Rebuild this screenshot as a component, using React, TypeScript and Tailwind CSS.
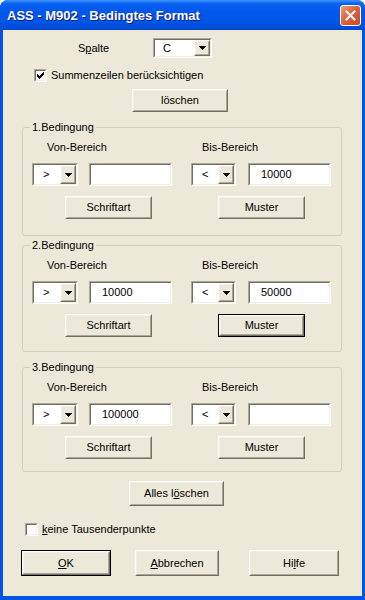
import React from 'react';

const ui = "font-['Liberation_Sans',Arial,sans-serif] text-[11px] leading-[13px] text-black";

type BoxProps = { className?: string; children?: React.ReactNode };

function Raised({ className = '', children, isDefault = false }: BoxProps & { isDefault?: boolean }) {
  const body = (
    <div className="h-full w-full border border-t-white border-l-white border-r-[#716F64] border-b-[#716F64] bg-[#ECE9D8]">
      <div className="flex h-full w-full items-center justify-center border border-t-[#F1EFE2] border-l-[#F1EFE2] border-r-[#ACA899] border-b-[#ACA899]">
        {children}
      </div>
    </div>
  );
  if (isDefault) return <div className={`border border-black ${className}`}>{body}</div>;
  return <div className={className}>{body}</div>;
}

function Sunken({ className = '', children }: BoxProps) {
  return (
    <div className={`border border-t-[#ACA899] border-l-[#ACA899] border-r-white border-b-white ${className}`}>
      <div className="flex h-full w-full items-center border border-t-[#716F64] border-l-[#716F64] border-r-[#F1EFE2] border-b-[#F1EFE2] bg-white">
        {children}
      </div>
    </div>
  );
}

function Combo({ value, className = '', pad = 'pl-[9px]' }: { value: string; className?: string; pad?: string }) {
  return (
    <Sunken className={className}>
      <span className={`flex-1 ${pad}`}>{value}</span>
      <Raised className="h-full w-[16px]">
        <svg width="7" height="4" viewBox="0 0 7 4" shapeRendering="crispEdges">
          <path d="M0 0h7v1H0zM1 1h5v1H1zM2 2h3v1H2zM3 3h1v1H3z" fill="#000" />
        </svg>
      </Raised>
    </Sunken>
  );
}

function Field({ value = '', className = '' }: { value?: string; className?: string }) {
  return (
    <Sunken className={className}>
      <span className="pl-[11px]">{value}</span>
    </Sunken>
  );
}

function Check({ checked }: { checked: boolean }) {
  return (
    <Sunken className="h-[13px] w-[13px] shrink-0">
      {checked && (
        <svg width="9" height="9" viewBox="0 0 9 9" shapeRendering="crispEdges">
          <path d="M1 3h1v3H1zM2 4h1v3H2zM3 5h1v3H3zM4 4h1v3H4zM5 3h1v3H5zM6 2h1v3H6zM7 1h1v3H7z" fill="#000" />
        </svg>
      )}
    </Sunken>
  );
}

function Group({
  title,
  von,
  bis,
  defaultMuster = false,
  pb = 'pb-[16px]',
}: {
  title: string;
  von: string;
  bis: string;
  defaultMuster?: boolean;
  pb?: string;
}) {
  return (
    <fieldset className={`ml-[19px] w-[320px] rounded-[3px] border border-[#D0D0BF] px-0 ${pb}`}>
      <legend className="ml-[7px] px-[2px] leading-[14px]">{title}</legend>
      <div className="mt-[7px] flex h-[13px]">
        <span className="ml-[24px] w-[155px]">Von-Bereich</span>
        <span>Bis-Bereich</span>
      </div>
      <div className="mt-[9px] flex h-[23px]">
        <Combo value=">" className="ml-[9px] w-[46px]" />
        <Field value={von} className="ml-[11px] w-[83px]" />
        <Combo value="<" className="ml-[19px] w-[45px]" />
        <Field value={bis} className="ml-[12px] w-[83px]" />
      </div>
      <div className="mt-[10px] flex h-[23px]">
        <Raised className="ml-[42px] w-[87px]">Schriftart</Raised>
        <Raised isDefault={defaultMuster} className="ml-[66px] w-[87px]">
          Muster
        </Raised>
      </div>
    </fieldset>
  );
}

export default function App() {
  return (
    <div className={`flex h-[600px] w-[365px] flex-col rounded-t-[8px] bg-[#0055E5] ${ui}`}>
      <div className="flex h-[30px] shrink-0 items-center rounded-t-[8px] bg-[linear-gradient(to_bottom,#3D95FF_0%,#0A61F0_12%,#0058EE_35%,#0055E5_75%,#0046D0_100%)] pl-[7px]">
        <span className="font-['Liberation_Sans',Arial,sans-serif] text-[13px] font-bold text-white [text-shadow:1px_1px_#0A1883]">
          ASS - M902 - Bedingtes Format
        </span>
        <div className="ml-auto mr-[4px] flex h-[21px] w-[21px] items-center justify-center rounded-[3px] border border-white bg-[linear-gradient(135deg,#EE9A7A_0%,#DD6440_45%,#C84A22_100%)]">
          <svg width="11" height="11" viewBox="0 0 11 11">
            <path d="M1.5 1.5L9.5 9.5M9.5 1.5L1.5 9.5" stroke="#fff" strokeWidth="2" strokeLinecap="square" />
          </svg>
        </div>
      </div>

      <div className="mx-[3px] mb-[4px] flex flex-1 flex-col bg-[#ECE9D8]">
        <div className="mt-[8px] flex h-[20px] items-center">
          <span className="ml-[75px] w-[75px]">
            S<span className="underline underline-offset-[1px]">p</span>alte
          </span>
          <Combo value="C" className="h-[20px] w-[59px]" pad="pl-[8px]" />
        </div>

        <div className="ml-[31px] mt-[11px] flex h-[13px] items-center gap-[4px]">
          <Check checked />
          <span>Summenzeilen berücksichtigen</span>
        </div>

        <Raised className="ml-[129px] mt-[7px] h-[23px] w-[96px]">löschen</Raised>

        <div className="mt-[8px]">
          <Group title="1.Bedingung" von="" bis="10000" />
        </div>
        <div className="mt-[2px]">
          <Group title="2.Bedingung" von="10000" bis="50000" defaultMuster pb="pb-[14px]" />
        </div>
        <div className="mt-[8px]">
          <Group title="3.Bedingung" von="100000" bis="" pb="pb-[12px]" />
        </div>

        <Raised className="ml-[126px] mt-[9px] h-[25px] w-[95px]">
          <span>
            Alles l<span className="underline underline-offset-[1px]">ö</span>schen
          </span>
        </Raised>

        <div className="ml-[22px] mt-[17px] flex h-[13px] items-center gap-[4px]">
          <Check checked={false} />
          <span>
            <span className="underline underline-offset-[1px]">k</span>eine Tausenderpunkte
          </span>
        </div>

        <div className="mt-[14px] flex h-[26px]">
          <Raised isDefault className="ml-[18px] w-[90px]">
            <span className="underline underline-offset-[1px]">O</span>K
          </Raised>
          <Raised className="ml-[24px] w-[84px]">
            <span>
              <span className="underline underline-offset-[1px]">A</span>bbrechen
            </span>
          </Raised>
          <Raised className="ml-[30px] w-[90px]">
            <span>
              Hi<span className="underline underline-offset-[1px]">l</span>fe
            </span>
          </Raised>
        </div>
      </div>
    </div>
  );
}
